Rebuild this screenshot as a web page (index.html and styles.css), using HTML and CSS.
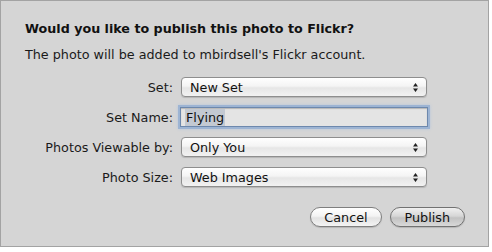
FILE: index.html
```html
<!DOCTYPE html>
<html lang="en">

<head>
    <meta charset="UTF-8">
    <title>Publish to Flickr</title>
    <link rel="stylesheet" href="styles.css">
</head>

<body>
    <!-- Sheet dialog -->
    <div class="sheet">
        <h1 class="title">Would you like to publish this photo to Flickr?</h1>
        <p class="subtitle">The photo will be added to mbirdsell's Flickr account.</p>

        <div class="form">
            <label class="label">Set:</label>
            <div class="popup">
                <span>New Set</span>
                <svg class="arrows" width="7" height="11" viewBox="0 0 7 11">
                    <path d="M3.5 1 L6 4.5 L1 4.5 Z M3.5 10 L6 6.5 L1 6.5 Z" fill="#222" />
                </svg>
            </div>

            <label class="label">Set Name:</label>
            <div class="field">
                <span class="selected">Flying</span>
            </div>

            <label class="label">Photos Viewable by:</label>
            <div class="popup">
                <span>Only You</span>
                <svg class="arrows" width="7" height="11" viewBox="0 0 7 11">
                    <path d="M3.5 1 L6 4.5 L1 4.5 Z M3.5 10 L6 6.5 L1 6.5 Z" fill="#222" />
                </svg>
            </div>

            <label class="label">Photo Size:</label>
            <div class="popup">
                <span>Web Images</span>
                <svg class="arrows" width="7" height="11" viewBox="0 0 7 11">
                    <path d="M3.5 1 L6 4.5 L1 4.5 Z M3.5 10 L6 6.5 L1 6.5 Z" fill="#222" />
                </svg>
            </div>
        </div>

        <!-- Buttons -->
        <div class="buttons">
            <button class="btn">Cancel</button>
            <button class="btn default">Publish</button>
        </div>
    </div>
</body>

</html>
```

FILE: styles.css
```css
body {
    margin: 0;
    background-color: #ffffff;
    font-family: "DejaVu Sans", Verdana, sans-serif;
    color: #1a1a1a;
}

/* The grey sheet */
.sheet {
    width: 487px;
    height: 245px;
    background-color: #d5d5d5;
    border: 1px solid #a3a3a3;
    box-sizing: content-box;
}

.title {
    margin: 20px 0 0 24px;
    font-size: 12.7px;
    line-height: 16px;
    font-weight: bold;
    color: #111;
}

.subtitle {
    margin: 10px 0 0 24px;
    font-size: 12.75px;
    line-height: 15px;
    color: #1a1a1a;
}

/* Label / control rows */
.form {
    display: grid;
    grid-template-columns: 172px 246px;
    grid-auto-rows: 20px;
    column-gap: 8px;
    row-gap: 10px;
    margin-top: 15px;
    align-items: center;
}

.label {
    text-align: right;
    font-size: 12.75px;
    color: #1a1a1a;
}

.popup {
    height: 20px;
    box-sizing: border-box;
    display: flex;
    align-items: center;
    justify-content: space-between;
    padding: 0 7px 0 8px;
    border: 1px solid #8e8e8e;
    border-radius: 4px;
    background: linear-gradient(#ffffff 0%, #f4f4f4 45%, #e6e6e6 55%, #f2f2f2 100%);
    box-shadow: 0 1px 1px rgba(0, 0, 0, 0.15);
    font-size: 12.75px;
    color: #111;
}

.field {
    height: 20px;
    box-sizing: border-box;
    margin: 0 -1px;
    display: flex;
    align-items: center;
    padding: 0 4px;
    border: 1px solid #6d88ad;
    background-color: #e4e4e4;
    box-shadow: 0 0 0 2px #9db4d3, 0 0 3px 2px #b6c6dc, inset 0 1px 1px rgba(0, 0, 0, 0.2);
    font-size: 12.75px;
    color: #111;
}

.selected {
    background-color: #c3c9d2;
    padding: 1px 1px;
}

.buttons {
    display: flex;
    justify-content: flex-end;
    gap: 8px;
    margin: 20px 23px 0 0;
}

.btn {
    height: 20px;
    padding: 0 13px;
    font-family: "DejaVu Sans", Verdana, sans-serif;
    font-size: 12.75px;
    color: #111;
    border: 1px solid #7f7f7f;
    border-radius: 10px;
    background: linear-gradient(#ffffff 0%, #f3f3f3 45%, #e2e2e2 55%, #f4f4f4 100%);
    box-shadow: 0 1px 1px rgba(0, 0, 0, 0.15);
}

.default {
    background: linear-gradient(#f0f0f0 0%, #d6d6d6 45%, #c2c2c2 55%, #d9d9d9 100%);
    border-color: #727272;
    padding: 0 14px;
}
```
